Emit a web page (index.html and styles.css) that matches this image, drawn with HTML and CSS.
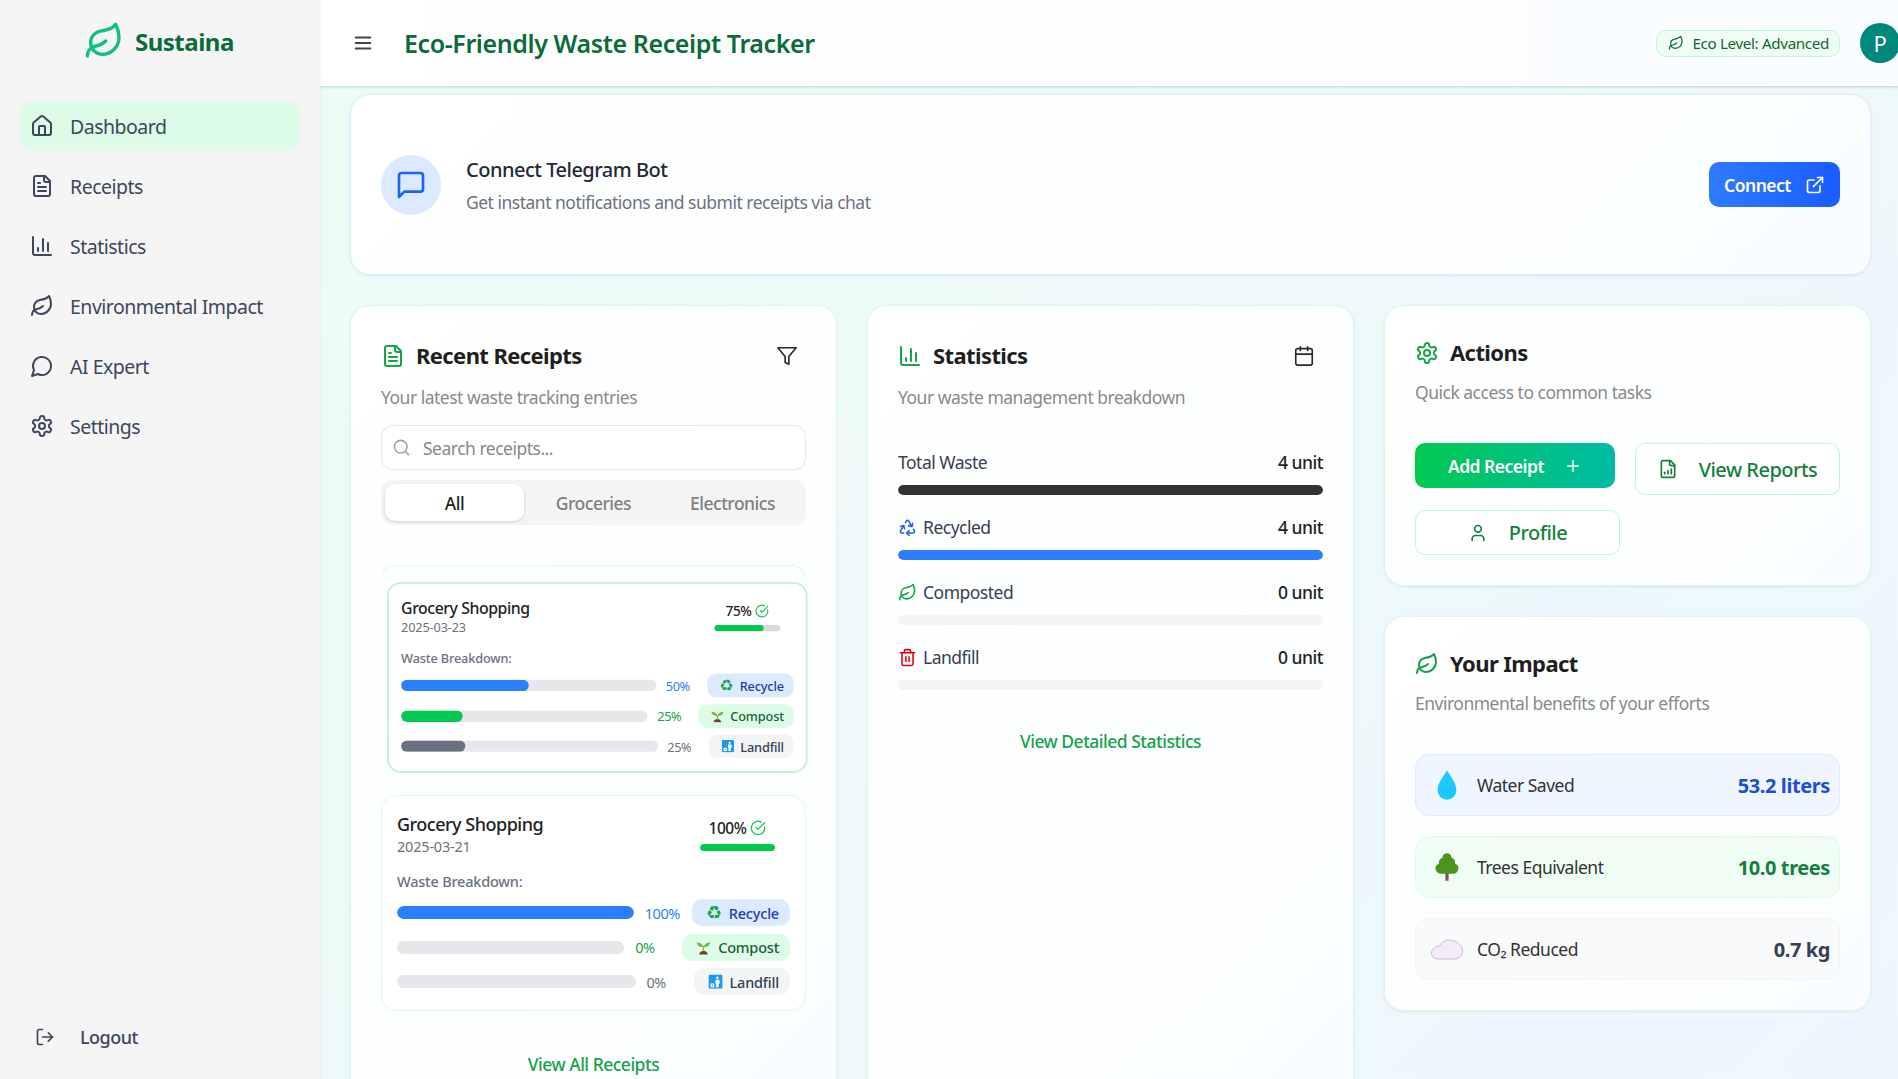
FILE: index.html
```html
<!DOCTYPE html>
<html lang="en">
<head>
<meta charset="utf-8">
<title>Sustaina</title>
<link rel="stylesheet" href="styles.css">
</head>
<body>
<svg class="sprite" aria-hidden="true">
  <symbol id="i-home" viewBox="0 0 24 24"><path d="M15 21v-8a1 1 0 0 0-1-1h-4a1 1 0 0 0-1 1v8"/><path d="M3 10a2 2 0 0 1 .709-1.528l7-5.999a2 2 0 0 1 2.582 0l7 5.999A2 2 0 0 1 21 10v9a2 2 0 0 1-2 2H5a2 2 0 0 1-2-2z"/></symbol>
  <symbol id="i-file" viewBox="0 0 24 24"><path d="M15 2H6a2 2 0 0 0-2 2v16a2 2 0 0 0 2 2h12a2 2 0 0 0 2-2V7Z"/><path d="M14 2v4a2 2 0 0 0 2 2h4"/><path d="M10 9H8"/><path d="M16 13H8"/><path d="M16 17H8"/></symbol>
  <symbol id="i-chart" viewBox="0 0 24 24"><path d="M3 3v16a2 2 0 0 0 2 2h16"/><path d="M18 17V9"/><path d="M13 17V5"/><path d="M8 17v-3"/></symbol>
  <symbol id="i-leaf" viewBox="0 0 24 24"><path d="M11 20A7 7 0 0 1 9.8 6.1C15.5 5 17 4.48 19 2c1 2 2 4.18 2 8 0 5.5-4.78 10-10 10Z"/><path d="M2 21c0-3 1.85-5.36 5.08-6C9.5 14.52 12 13 13 12"/></symbol>
  <symbol id="i-chat" viewBox="0 0 24 24"><path d="M7.9 20A9 9 0 1 0 4 16.1L2 22Z"/></symbol>
  <symbol id="i-gear" viewBox="0 0 24 24"><path d="M12.22 2h-.44a2 2 0 0 0-2 2v.18a2 2 0 0 1-1 1.73l-.43.25a2 2 0 0 1-2 0l-.15-.08a2 2 0 0 0-2.73.73l-.22.38a2 2 0 0 0 .73 2.73l.15.1a2 2 0 0 1 1 1.72v.51a2 2 0 0 1-1 1.74l-.15.09a2 2 0 0 0-.73 2.73l.22.38a2 2 0 0 0 2.73.73l.15-.08a2 2 0 0 1 2 0l.43.25a2 2 0 0 1 1 1.73V20a2 2 0 0 0 2 2h.44a2 2 0 0 0 2-2v-.18a2 2 0 0 1 1-1.73l.43-.25a2 2 0 0 1 2 0l.15.08a2 2 0 0 0 2.73-.73l.22-.39a2 2 0 0 0-.73-2.73l-.15-.08a2 2 0 0 1-1-1.74v-.5a2 2 0 0 1 1-1.74l.15-.09a2 2 0 0 0 .73-2.73l-.22-.38a2 2 0 0 0-2.73-.73l-.15.08a2 2 0 0 1-2 0l-.43-.25a2 2 0 0 1-1-1.73V4a2 2 0 0 0-2-2z"/><circle cx="12" cy="12" r="3"/></symbol>
  <symbol id="i-logout" viewBox="0 0 24 24"><path d="M9 21H5a2 2 0 0 1-2-2V5a2 2 0 0 1 2-2h4"/><path d="m16 17 5-5-5-5"/><path d="M21 12H9"/></symbol>
  <symbol id="i-menu" viewBox="0 0 24 24"><path d="M4 6h16"/><path d="M4 12h16"/><path d="M4 18h16"/></symbol>
  <symbol id="i-msg" viewBox="0 0 24 24"><path d="M21 15a2 2 0 0 1-2 2H7l-4 4V5a2 2 0 0 1 2-2h14a2 2 0 0 1 2 2z"/></symbol>
  <symbol id="i-ext" viewBox="0 0 24 24"><path d="M15 3h6v6"/><path d="M10 14 21 3"/><path d="M18 13v6a2 2 0 0 1-2 2H5a2 2 0 0 1-2-2V8a2 2 0 0 1 2-2h6"/></symbol>
  <symbol id="i-filter" viewBox="0 0 24 24"><path d="M22 3H2l8 9.46V19l4 2v-8.54z"/></symbol>
  <symbol id="i-cal" viewBox="0 0 24 24"><path d="M8 2v4"/><path d="M16 2v4"/><rect x="3" y="4" width="18" height="18" rx="2"/><path d="M3 10h18"/></symbol>
  <symbol id="i-search" viewBox="0 0 24 24"><circle cx="11" cy="11" r="8"/><path d="m21 21-4.3-4.3"/></symbol>
  <symbol id="i-check" viewBox="0 0 24 24"><path d="M21.801 10A10 10 0 1 1 17 3.335"/><path d="m9 11 3 3L22 4"/></symbol>
  <symbol id="i-recycle" viewBox="0 0 24 24"><path d="M7 19H4.815a1.83 1.83 0 0 1-1.57-.881 1.785 1.785 0 0 1-.004-1.784L7.196 9.5"/><path d="M11 19h8.203a1.83 1.83 0 0 0 1.556-.89 1.784 1.784 0 0 0 0-1.775l-1.226-2.12"/><path d="m14 16-3 3 3 3"/><path d="M8.293 13.596 7.196 9.5 3.1 10.598"/><path d="m9.344 5.811 1.093-1.892A1.83 1.83 0 0 1 11.985 3a1.784 1.784 0 0 1 1.546.888l3.943 6.843"/><path d="m13.378 9.633 4.096 1.098 1.097-4.096"/></symbol>
  <symbol id="i-trash" viewBox="0 0 24 24"><path d="M3 6h18"/><path d="M19 6v14c0 1-1 2-2 2H7c-1 0-2-1-2-2V6"/><path d="M8 6V4c0-1 1-2 2-2h4c1 0 2 1 2 2v2"/><path d="M10 11v6"/><path d="M14 11v6"/></symbol>
  <symbol id="i-plus" viewBox="0 0 24 24"><path d="M5 12h14"/><path d="M12 5v14"/></symbol>
  <symbol id="i-user" viewBox="0 0 24 24"><path d="M19 21v-2a4 4 0 0 0-4-4H9a4 4 0 0 0-4 4v2"/><circle cx="12" cy="7" r="4"/></symbol>
  <symbol id="i-report" viewBox="0 0 24 24"><path d="M15 2H6a2 2 0 0 0-2 2v16a2 2 0 0 0 2 2h12a2 2 0 0 0 2-2V7Z"/><path d="M14 2v4a2 2 0 0 0 2 2h4"/><path d="M8 18v-2"/><path d="M12 18v-4"/><path d="M16 18v-6"/></symbol>
  <symbol id="e-sprout" viewBox="0 0 24 24"><path fill="#6b3f2a" d="M5 23c1-4 4-6 7-6s6 2 7 6z"/><path fill="#7cb342" d="M11 18V10h2v8z"/><path fill="#7cb342" d="M12 11C10 6 6 4 1 4c1 5 5 8 11 7zM12 11c2-5 6-7 11-7-1 5-5 8-11 7z"/></symbol>
  <symbol id="e-bin" viewBox="0 0 24 24"><rect x="1" y="1" width="22" height="22" rx="2" fill="#1e9be8"/><circle cx="15" cy="6" r="2" fill="#fff"/><path fill="#fff" d="M12 9h6l1 6h-2v6h-4v-6h-1zM4 15h6v6H4z"/><path fill="#1e9be8" d="M6 17h2v2H6z"/></symbol>
  <symbol id="e-drop" viewBox="0 0 24 24"><path fill="#1ec8ff" d="M12 1c2 4 7 9 7 15a7 7 0 0 1-14 0C5 10 10 5 12 1z"/></symbol>
  <symbol id="e-tree" viewBox="-2 -1 28 26"><rect x="10.600" y="17" width="2.800" height="7" fill="#795548"/><path fill="#4b951d" d="M12 0c2.500 0 4 2 4 4 2 .5 3.400 2.500 3 5 2 .8 3.200 2.600 3 4.600-.3 2.600-2.500 4.400-5 4.400H7c-2.500 0-4.700-1.800-5-4.400C1.800 11.600 3 9.800 5 9c-.4-2.500 1-4.500 3-5 0-2 1.500-4 4-4z"/></symbol>
  <symbol id="e-cloud" viewBox="0 0 32 24"><path fill="#f3ebf7" stroke="#b9aec4" stroke-width=".8" d="M8 22C3.500 22 .5 19.500 .5 16s3-6.500 8-7c1.500-3 5-6 9.500-6 7 0 13.500 5 13.500 11 0 4.500-2.500 8-8 8z"/></symbol>
</svg>

<div class="app">
  <aside class="sidebar">
    <div class="brand">
      <svg class="brand-icon"><use href="#i-leaf"/></svg>
      <span class="brand-name">Sustaina</span>
    </div>
    <nav class="nav">
      <a class="nav-item active"><svg class="icon"><use href="#i-home"/></svg>Dashboard</a>
      <a class="nav-item"><svg class="icon"><use href="#i-file"/></svg>Receipts</a>
      <a class="nav-item"><svg class="icon"><use href="#i-chart"/></svg>Statistics</a>
      <a class="nav-item"><svg class="icon"><use href="#i-leaf"/></svg>Environmental Impact</a>
      <a class="nav-item"><svg class="icon"><use href="#i-chat"/></svg>AI Expert</a>
      <a class="nav-item"><svg class="icon"><use href="#i-gear"/></svg>Settings</a>
    </nav>
    <div class="side-foot">
      <svg class="icon logout-icon"><use href="#i-logout"/></svg>
      <span>Logout</span>
    </div>
  </aside>

  <div class="main">
    <header class="topbar">
      <svg class="icon menu-icon"><use href="#i-menu"/></svg>
      <h1 class="page-title">Eco-Friendly Waste Receipt Tracker</h1>
      <div class="eco-pill"><svg class="icon eco-icon"><use href="#i-leaf"/></svg>Eco Level: Advanced</div>
      <div class="avatar">P</div>
    </header>

    <main class="content">
      <section class="card telegram">
        <div class="tg-circle"><svg class="icon tg-icon"><use href="#i-msg"/></svg></div>
        <div class="tg-text">
          <div class="tg-title">Connect Telegram Bot</div>
          <div class="tg-sub">Get instant notifications and submit receipts via chat</div>
        </div>
        <button class="btn-connect">Connect<svg class="icon ext-icon"><use href="#i-ext"/></svg></button>
      </section>

      <div class="columns">
        <section class="card panel">
          <div class="panel-head">
            <svg class="icon green"><use href="#i-file"/></svg>
            <h2>Recent Receipts</h2>
            <svg class="icon head-action"><use href="#i-filter"/></svg>
          </div>
          <p class="panel-sub">Your latest waste tracking entries</p>
          <div class="search"><svg class="icon search-icon"><use href="#i-search"/></svg><span>Search receipts...</span></div>
          <div class="tabs"><span class="tab on">All</span><span class="tab">Groceries</span><span class="tab">Electronics</span></div>

          <div class="receipts">
            <div class="ghost"></div>
            <div class="shrunk-slot">
              <article class="receipt shrunk">
                <div class="r-top">
                  <div><div class="r-name">Grocery Shopping</div><div class="r-date">2025-03-23</div></div>
                  <div class="r-score">
                    <div class="r-pct">75% <svg class="icon r-check"><use href="#i-check"/></svg></div>
                    <div class="track small"><div class="fill f-green" style="width:75%"></div></div>
                  </div>
                </div>
                <div class="r-label">Waste Breakdown:</div>
                <div class="r-row"><div class="track"><div class="fill f-blue" style="width:50%"></div></div><span class="pct blue">50%</span><span class="tag t-blue"><span class="recycle-glyph">♻</span>Recycle</span></div>
                <div class="r-row"><div class="track"><div class="fill f-green" style="width:25%"></div></div><span class="pct grn">25%</span><span class="tag t-green"><svg class="emoji"><use href="#e-sprout"/></svg>Compost</span></div>
                <div class="r-row"><div class="track"><div class="fill f-gray" style="width:25%"></div></div><span class="pct gry">25%</span><span class="tag t-gray"><svg class="emoji"><use href="#e-bin"/></svg>Landfill</span></div>
              </article>
            </div>
            <article class="receipt">
              <div class="r-top">
                <div><div class="r-name">Grocery Shopping</div><div class="r-date">2025-03-21</div></div>
                <div class="r-score">
                  <div class="r-pct">100% <svg class="icon r-check"><use href="#i-check"/></svg></div>
                  <div class="track small"><div class="fill f-green" style="width:100%"></div></div>
                </div>
              </div>
              <div class="r-label">Waste Breakdown:</div>
              <div class="r-row"><div class="track"><div class="fill f-blue" style="width:100%"></div></div><span class="pct blue">100%</span><span class="tag t-blue"><span class="recycle-glyph">♻</span>Recycle</span></div>
              <div class="r-row"><div class="track"><div class="fill f-green" style="width:0%"></div></div><span class="pct grn">0%</span><span class="tag t-green"><svg class="emoji"><use href="#e-sprout"/></svg>Compost</span></div>
              <div class="r-row"><div class="track"><div class="fill f-gray" style="width:0%"></div></div><span class="pct gry">0%</span><span class="tag t-gray"><svg class="emoji"><use href="#e-bin"/></svg>Landfill</span></div>
            </article>
          </div>
          <a class="panel-link link-all">View All Receipts</a>
        </section>

        <section class="card panel">
          <div class="panel-head">
            <svg class="icon green"><use href="#i-chart"/></svg>
            <h2>Statistics</h2>
            <svg class="icon head-action"><use href="#i-cal"/></svg>
          </div>
          <p class="panel-sub">Your waste management breakdown</p>
          <div class="stats">
            <div class="stat">
              <div class="stat-row"><span class="stat-name">Total Waste</span><b>4 unit</b></div>
              <div class="bar"><div class="bar-fill b-dark" style="width:100%"></div></div>
            </div>
            <div class="stat">
              <div class="stat-row"><span class="stat-name"><svg class="icon stat-icon c-blue"><use href="#i-recycle"/></svg>Recycled</span><b>4 unit</b></div>
              <div class="bar"><div class="bar-fill b-blue" style="width:100%"></div></div>
            </div>
            <div class="stat">
              <div class="stat-row"><span class="stat-name"><svg class="icon stat-icon green"><use href="#i-leaf"/></svg>Composted</span><b>0 unit</b></div>
              <div class="bar"><div class="bar-fill" style="width:0%"></div></div>
            </div>
            <div class="stat">
              <div class="stat-row"><span class="stat-name"><svg class="icon stat-icon c-red"><use href="#i-trash"/></svg>Landfill</span><b>0 unit</b></div>
              <div class="bar"><div class="bar-fill" style="width:0%"></div></div>
            </div>
          </div>
          <a class="panel-link link-stats">View Detailed Statistics</a>
        </section>

        <div class="stack">
          <section class="card panel compact">
            <div class="panel-head">
              <svg class="icon green"><use href="#i-gear"/></svg>
              <h2>Actions</h2>
            </div>
            <p class="panel-sub">Quick access to common tasks</p>
            <div class="actions">
              <button class="btn btn-add">Add Receipt<svg class="icon plus-icon"><use href="#i-plus"/></svg></button>
              <button class="btn btn-line btn-tall"><svg class="icon btn-icon"><use href="#i-report"/></svg>View Reports</button>
              <button class="btn btn-line btn-profile"><svg class="icon btn-icon"><use href="#i-user"/></svg>Profile</button>
            </div>
          </section>

          <section class="card panel compact impact-card">
            <div class="panel-head">
              <svg class="icon green"><use href="#i-leaf"/></svg>
              <h2>Your Impact</h2>
            </div>
            <p class="panel-sub">Environmental benefits of your efforts</p>
            <div class="impacts">
              <div class="impact i-blue"><svg class="impact-emoji"><use href="#e-drop"/></svg><span class="impact-name">Water Saved</span><b class="val-blue">53.2 liters</b></div>
              <div class="impact i-green"><svg class="impact-emoji"><use href="#e-tree"/></svg><span class="impact-name">Trees Equivalent</span><b class="val-green">10.0 trees</b></div>
              <div class="impact i-gray"><svg class="impact-emoji"><use href="#e-cloud"/></svg><span class="impact-name">CO₂ Reduced</span><b class="val-dark">0.7 kg</b></div>
            </div>
          </section>
        </div>
      </div>
    </main>
  </div>
</div>
</body>
</html>
```
FILE: styles.css
```css
* { box-sizing: border-box; }
html, body { margin: 0; height: 100%; overflow: hidden; }
body { font-family: "Noto Sans", "Open Sans", sans-serif; color: #1f2937; letter-spacing: -0.5px; }
.sprite { display: none; }
.icon { width: 24px; height: 24px; fill: none; stroke: currentColor; stroke-width: 2; stroke-linecap: round; stroke-linejoin: round; flex: none; }
.green { color: #16a34a; }
.c-blue { color: #2563eb; }
.c-red { color: #e7000b; }

.app { display: flex; height: 1079px; width: 1898px; overflow: hidden; }

/* Sidebar */
.sidebar { width: 320px; flex: none; background: #f5f5f5; display: flex; flex-direction: column; box-shadow: 1px 0 3px rgba(0,0,0,.05); position: relative; z-index: 3; }
.brand { height: 81px; display: flex; align-items: center; gap: 11px; padding: 2px 0 0 84px; border-bottom: 1px solid #dcfce7; }
.brand-icon { width: 40px; height: 40px; fill: none; stroke: #10c07f; stroke-width: 2; stroke-linecap: round; stroke-linejoin: round; }
.brand-name { font-size: 24px; font-weight: 700; color: #0b6b3a; }
.nav { flex: 1; padding: 20px 20px 0; display: flex; flex-direction: column; gap: 10px; }
.nav-item { height: 50px; border-radius: 12px; display: flex; align-items: center; gap: 16px; padding-left: 10px; font-size: 19.500px; color: #3d475c; }
.nav-item.active { background: #dcfce7; }
.side-foot { height: 85px; border-top: 1px solid #dcfce7; display: flex; align-items: center; gap: 25px; padding-left: 35px; font-size: 18px; font-weight: 500; color: #3d475c; }
.logout-icon { width: 20px; height: 20px; }

/* Top bar */
.main { flex: 1; min-width: 0; display: flex; flex-direction: column; background: linear-gradient(135deg, #ecfdf5, #eff6ff); }
.topbar { height: 86px; flex: none; margin-right: -2px; background: linear-gradient(90deg, #fff, #f9fcff); display: flex; align-items: center; padding-left: 32px; box-shadow: 0 1px 3px rgba(22,101,52,.22); position: relative; z-index: 2; }
.menu-icon { width: 22px; height: 22px; color: #444; }
.page-title { margin: 0 0 0 30px; font-size: 25px; font-weight: 600; letter-spacing: -.4px; color: #0b6b3a; }
.eco-pill { margin-left: auto; height: 27px; display: flex; align-items: center; gap: 8px; padding: 0 10px 0 11px; font-size: 15.200px; letter-spacing: -.35px; color: #166534; background: #f0fdf4; border: 1px solid #bbf7d0; border-radius: 10px; }
.eco-icon { width: 16px; height: 16px; stroke-width: 1.8; }
.avatar { margin-left: 20px; width: 40px; height: 40px; border-radius: 50%; background: #00897b; color: #fff; font-size: 22px; display: flex; align-items: center; justify-content: center; }

/* Content */
.content { flex: 1; min-height: 0; overflow: hidden; padding: 8px 27px 0 30px; }
.card { background: linear-gradient(135deg, #fff, #fafdff); border-radius: 20px; }
.telegram { height: 181px; display: flex; align-items: center; padding: 0 30px; border: 1px solid #e0e9fa; box-shadow: 0 1px 3px rgba(37,99,235,.12); }
.tg-circle { width: 60px; height: 60px; border-radius: 50%; background: #dbeafe; display: flex; align-items: center; justify-content: center; flex: none; }
.tg-icon { width: 32px; height: 32px; color: #1d63f5; }
.tg-text { margin-left: 25px; flex: 1; }
.tg-title { font-size: 20px; font-weight: 500; color: #1f2937; }
.tg-sub { font-size: 17.500px; color: #6b7280; margin-top: 7px; }
.btn-connect { width: 131px; height: 45px; border: 0; border-radius: 10px; background: linear-gradient(90deg, #2f7bff, #1a5cff); color: #fff; font: 600 17.500px "Noto Sans", sans-serif; letter-spacing: -.5px; display: flex; align-items: center; justify-content: center; gap: 14px; }
.ext-icon { width: 20px; height: 20px; }

.columns { display: grid; grid-template-columns: repeat(3, 487px); gap: 30px; margin-top: 30px; align-items: stretch; }
.panel { padding: 30px; border: 1px solid #dcf7e7; box-shadow: 0 1px 3px rgba(22,163,74,.12); min-height: 0; }
.panel-head { display: flex; align-items: center; gap: 11px; height: 40px; }
.panel-head h2 { margin: -2px 0 0; font-size: 22px; font-weight: 700; letter-spacing: -.6px; color: #1f1f1f; }
.head-action { margin-left: auto; margin-right: 8px; width: 22px; height: 22px; stroke-width: 1.8; color: #2a2a2a; }
.panel-sub { margin: 9px 0 0; font-size: 17.500px; color: #8a8a8a; }

/* Search and tabs */
.search { margin-top: 16px; height: 45px; border: 1px solid #e7e9ec; border-radius: 12px; background: #fff; display: flex; align-items: center; gap: 12px; padding-left: 10px; font-size: 17.500px; color: #888; box-shadow: 0 1px 2px rgba(0,0,0,.04); }
.search-icon { width: 19px; height: 19px; color: #94a3b8; }
.tabs { margin-top: 10px; height: 45px; background: #f4f4f5; border-radius: 12px; padding: 4px; display: grid; grid-template-columns: repeat(3, 1fr); }
.tab { display: flex; align-items: center; justify-content: center; border-radius: 10px; font-size: 17.500px; font-weight: 500; color: #808080; }
.tab.on { background: #fff; color: #1f1f1f; box-shadow: 0 1px 3px rgba(0,0,0,.15); }

/* Receipt cards */
.receipts { position: relative; margin-top: 40px; }
.ghost { position: absolute; left: 0; right: 0; top: 0; height: 14px; border: 1px solid #dcfce7; border-bottom: 0; border-radius: 16px 16px 0 0; }
.shrunk-slot { height: 191px; padding: 17px 0 0 6px; box-sizing: content-box; }
.receipt { background: #fff; border: 1px solid #dcfce7; border-radius: 16px; padding: 15px; width: 425px; height: 216px; }
.receipts > .receipt { margin-top: 22px; }
.receipt.shrunk { width: 478px; height: 217px; transform: scale(.88); transform-origin: 0 0; border-color: #b9f5cf; border-width: 2px; padding: 14px; }
.r-top { display: flex; justify-content: space-between; align-items: flex-start; height: 63px; }
.r-name { font-size: 18px; font-weight: 500; color: #222; line-height: 24px; padding-top: 1px; }
.r-date { font-size: 14.500px; color: #6b7280; line-height: 20px; letter-spacing: -.2px; }
.r-score { width: 75px; margin: 7px 15px 0 0; }
.r-pct { font-size: 15.500px; font-weight: 500; color: #222; line-height: 20px; display: flex; align-items: center; justify-content: center; gap: 4px; white-space: nowrap; }
.r-check { width: 16px; height: 16px; color: #22c55e; }
.track { flex: 1; height: 13px; background: #e5e7eb; border-radius: 7px; overflow: hidden; }
.track.small { height: 7px; margin-top: 6px; flex: none; background: #d9d9d9; }
.fill { height: 100%; border-radius: 7px; }
.f-green { background: #00c950; }
.f-blue { background: #2b7fff; }
.f-gray { background: #6a7282; }
.r-label { font-size: 14.500px; font-weight: 500; letter-spacing: -.2px; color: #6b7280; line-height: 20px; margin-top: -3px; margin-bottom: 8px; }
.r-row { display: flex; align-items: center; height: 27px; margin-bottom: 7.500px; }
.pct { width: 36px; margin: 0 11px; font-size: 14.500px; white-space: nowrap; }
.blue { color: #2b7fff; }
.grn { color: #16a34a; }
.gry { color: #6b7280; }
.tag { height: 27px; padding: 0 11px 0 14px; border-radius: 10px; display: flex; align-items: center; gap: 7px; font-size: 14.500px; font-weight: 500; letter-spacing: -.2px; }
.t-blue { background: #dbeafe; color: #1e40af; }
.t-green { background: #dcfce7; color: #166534; }
.t-gray { background: #f3f4f6; color: #364153; }
.recycle-glyph { font-family: "DejaVu Sans", sans-serif; font-size: 18px; color: #16a34a; line-height: 1; }
.emoji { width: 15px; height: 15px; flex: none; }
.panel-link { display: block; text-align: center; font-size: 17.500px; font-weight: 500; color: #16a34a; }
.link-all { margin-top: 41px; }
.link-stats { margin-top: 39px; }

/* Statistics */
.stats { margin-top: 38px; display: flex; flex-direction: column; gap: 17px; }
.stat-row { display: flex; justify-content: space-between; align-items: center; height: 30px; font-size: 17.500px; color: #374151; }
.stat-row b { font-weight: 500; color: #222; }
.stat-name { display: flex; align-items: center; gap: 6px; }
.stat-icon { width: 19px; height: 19px; }
.bar { height: 10px; border-radius: 5px; background: #f3f4f6; margin-top: 8px; overflow: hidden; }
.bar-fill { height: 100%; border-radius: 5px; }
.b-dark { background: #333; }
.b-blue { background: #2b7fff; }

/* Right column */
.stack { display: flex; flex-direction: column; gap: 30px; }
.compact .panel-head { height: 34px; }
.compact .panel-sub { margin-top: 10px; }
.actions { margin-top: 39px; display: flex; flex-wrap: wrap; align-items: flex-start; column-gap: 20px; row-gap: 15px; }
.btn { height: 45px; border-radius: 10px; font: 600 17.500px "Noto Sans", sans-serif; letter-spacing: -.5px; display: flex; align-items: center; justify-content: center; }
.btn-add { width: 200px; border: 0; color: #fff; background: linear-gradient(90deg, #00c950, #00bba7); gap: 20px; }
.plus-icon { width: 18px; height: 18px; }
.btn-line { width: 205px; background: #fff; border: 1px solid #bbf7d0; color: #15803d; font-size: 20px; font-weight: 500; gap: 21px; }
.btn-tall { height: 52px; }
.btn-icon { width: 20px; height: 20px; }
.impacts { margin-top: 39px; display: flex; flex-direction: column; gap: 20px; }
.impact { height: 62px; border-radius: 14px; display: flex; align-items: center; padding: 0 9px 0 15px; border: 1px solid; font-size: 17.500px; color: #333; }
.impact-emoji { width: 32px; height: 32px; flex: none; }
.impact-name { margin-left: 14px; flex: 1; }
.impact b { font-size: 20px; font-weight: 700; letter-spacing: -.4px; }
.i-blue { background: #eff6ff; border-color: #dbeafe; }
.i-green { background: #f0fdf4; border-color: #dcfce7; }
.i-gray { background: #f9fafb; border-color: #f3f4f6; }
.val-blue { color: #1d4ed8; }
.val-green { color: #15803d; }
.val-dark { color: #364153; }
```
